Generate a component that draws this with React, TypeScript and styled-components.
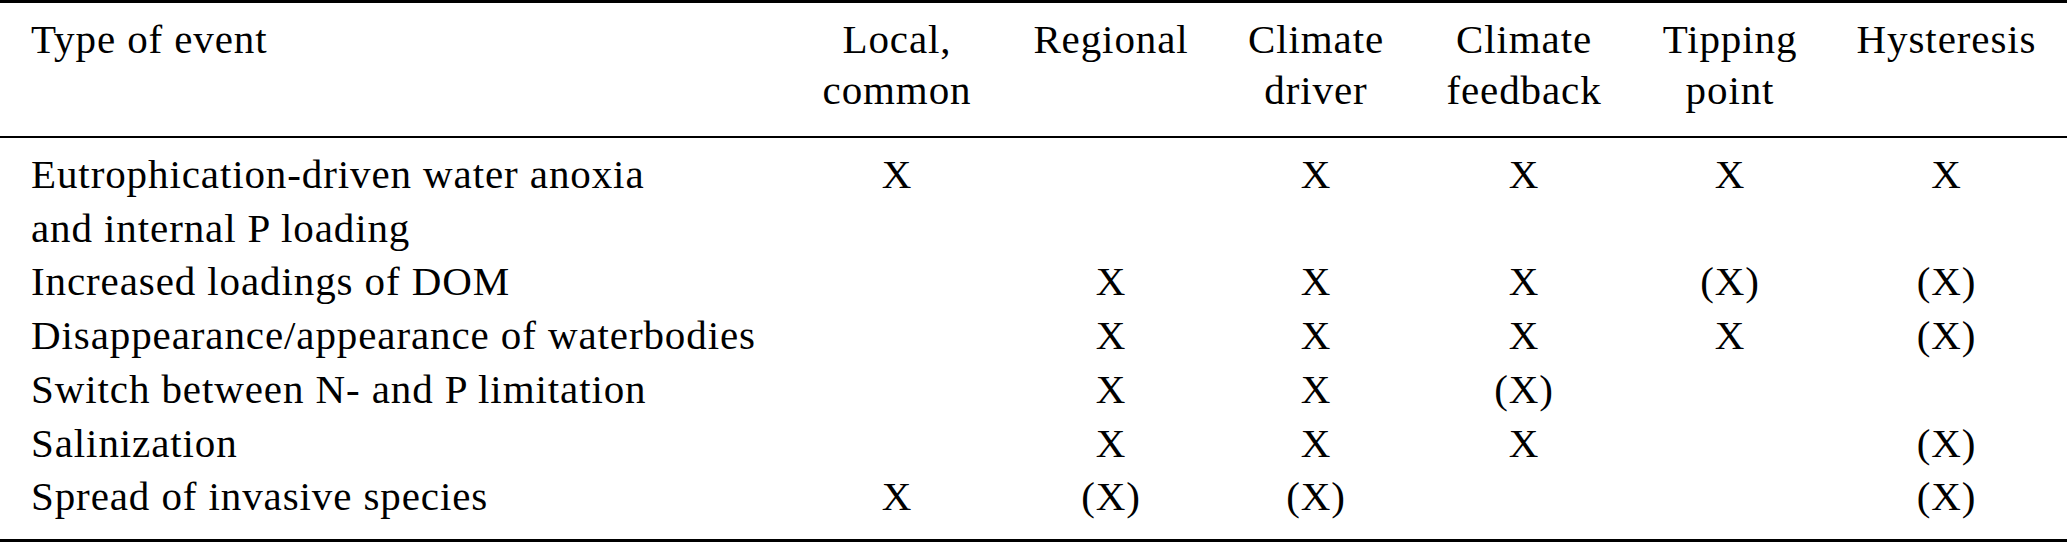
import React from "react";
import styled, { createGlobalStyle } from "styled-components";

const GlobalStyle = createGlobalStyle`
    html, body {
        margin: 0;
        padding: 0;
        background: #ffffff;
    }
`;

const Table = styled.table`
    width: 2067px;
    table-layout: fixed;
    border-collapse: collapse;
    border-top: 3px solid #000;
    border-bottom: 3px solid #000;
    font-family: "Liberation Serif", "Times New Roman", serif;
    font-size: 41px;
    letter-spacing: 0.9px;
    color: #000;
`;

const Col = styled.col<{ $w: number }>`
    width: ${(props) => props.$w}px;
`;

const Head = styled.thead`
    border-bottom: 2px solid #000;
`;

const HeadCell = styled.th<{ $first?: boolean }>`
    font-weight: normal;
    line-height: 51px;
    vertical-align: top;
    text-align: ${(props) => (props.$first ? "left" : "center")};
    padding: 11px 0 20px ${(props) => (props.$first ? "31px" : "0px")};
    white-space: nowrap;
`;

const Row = styled.tr<{ $pos: "first" | "mid" | "last" }>`
    & > td {
        padding-top: ${(props) => (props.$pos === "first" ? "10px" : "0px")};
        padding-bottom: ${(props) => (props.$pos === "last" ? "15px" : "0px")};
    }
`;

const EventCell = styled.td`
    line-height: 53.7px;
    vertical-align: top;
    text-align: left;
    padding-left: 31px;
    white-space: nowrap;
`;

const MarkCell = styled.td`
    line-height: 53.7px;
    vertical-align: top;
    text-align: center;
`;

interface EventRow {
    name: string[];
    marks: string[];
}

const columns = [
    { w: 790, label: ["Type of event"] },
    { w: 214, label: ["Local,", "common"] },
    { w: 214, label: ["Regional"] },
    { w: 196, label: ["Climate", "driver"] },
    { w: 220, label: ["Climate", "feedback"] },
    { w: 192, label: ["Tipping", "point"] },
    { w: 241, label: ["Hysteresis"] },
];

const rows: EventRow[] = [
    {
        name: ["Eutrophication-driven water anoxia", "and internal P loading"],
        marks: ["X", "", "X", "X", "X", "X"],
    },
    {
        name: ["Increased loadings of DOM"],
        marks: ["", "X", "X", "X", "(X)", "(X)"],
    },
    {
        name: ["Disappearance/appearance of waterbodies"],
        marks: ["", "X", "X", "X", "X", "(X)"],
    },
    {
        name: ["Switch between N- and P limitation"],
        marks: ["", "X", "X", "(X)", "", ""],
    },
    {
        name: ["Salinization"],
        marks: ["", "X", "X", "X", "", "(X)"],
    },
    {
        name: ["Spread of invasive species"],
        marks: ["X", "(X)", "(X)", "", "", "(X)"],
    },
];

const lines = (parts: string[]) =>
    parts.map((p, i) => (
        <React.Fragment key={i}>
            {i > 0 && <br />}
            {p}
        </React.Fragment>
    ));

export default function App() {
    return (
        <>
            <GlobalStyle />
            <Table>
                <colgroup>
                    {columns.map((c, i) => (
                        <Col key={i} $w={c.w} />
                    ))}
                </colgroup>
                <Head>
                    <tr>
                        {columns.map((c, i) => (
                            <HeadCell key={i} $first={i === 0}>
                                {lines(c.label)}
                            </HeadCell>
                        ))}
                    </tr>
                </Head>
                <tbody>
                    {rows.map((r, i) => (
                        <Row
                            key={i}
                            $pos={
                                i === 0
                                    ? "first"
                                    : i === rows.length - 1
                                    ? "last"
                                    : "mid"
                            }
                        >
                            <EventCell>{lines(r.name)}</EventCell>
                            {r.marks.map((m, j) => (
                                <MarkCell key={j}>{m}</MarkCell>
                            ))}
                        </Row>
                    ))}
                </tbody>
            </Table>
        </>
    );
}
